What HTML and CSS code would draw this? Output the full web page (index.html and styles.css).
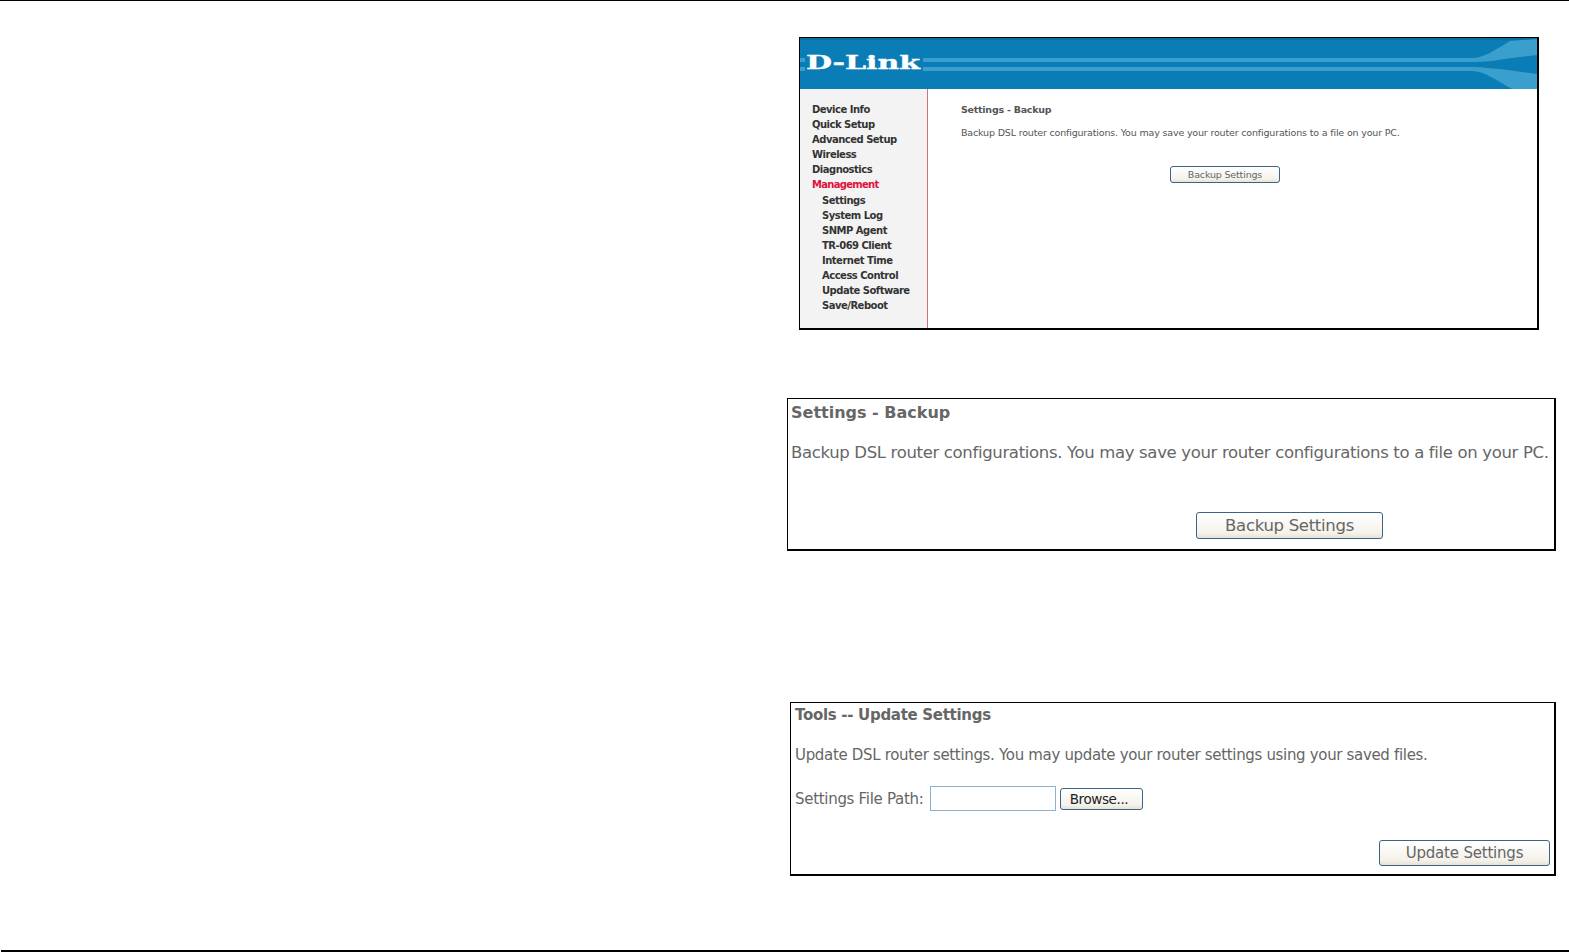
FILE: index.html
```html
<!DOCTYPE html>
<html lang="en">

<head>
    <meta charset="UTF-8" />
    <title>Settings - Backup</title>
    <link rel="stylesheet" href="styles.css">
</head>

<body>
    <div class="page">
        <div class="rule"></div>

        <div class="shot shot-router">
            <svg class="banner" width="737" height="51" viewBox="0 0 737 51">
                <rect width="737" height="51" fill="#0a7cb6" />
                <rect width="737" height="2" fill="#0b6f9f" />
                <path fill="#3b9fcd" d="M0 20H672C682 20 692 14 710 3L737 1V17L708 20.500C694 23 684 24 672 24H0Z" />
                <path fill="#3b9fcd" d="M0 29H672C684 29 696 31 708 32L737 36V51H712C696 42 684 33 672 33H0Z" />
                <rect x="5" y="14" width="118" height="22" fill="#0a7cb6" />
                <text class="logo" x="6" y="31" textLength="114" lengthAdjust="spacingAndGlyphs">D-Link</text>
            </svg>
            <div class="router-body">
                <div class="side-menu">
                    <div>Device Info</div>
                    <div>Quick Setup</div>
                    <div>Advanced Setup</div>
                    <div>Wireless</div>
                    <div>Diagnostics</div>
                    <div class="active">Management</div>
                    <div class="sub">Settings</div>
                    <div class="sub">System Log</div>
                    <div class="sub">SNMP Agent</div>
                    <div class="sub">TR-069 Client</div>
                    <div class="sub">Internet Time</div>
                    <div class="sub">Access Control</div>
                    <div class="sub">Update Software</div>
                    <div class="sub">Save/Reboot</div>
                </div>
                <div class="router-content">
                    <h3>Settings - Backup</h3>
                    <p>Backup DSL router configurations. You may save your router configurations to a file on your PC.</p>
                    <button class="btn btn-small">Backup Settings</button>
                </div>
            </div>
        </div>

        <div class="shot shot-backup">
            <h2>Settings - Backup</h2>
            <p>Backup DSL router configurations. You may save your router configurations to a file on your PC.</p>
            <button class="btn btn-backup">Backup Settings</button>
        </div>

        <div class="shot shot-update">
            <h2>Tools -- Update Settings</h2>
            <p>Update DSL router settings. You may update your router settings using your saved files.</p>
            <div class="file-row">
                <label>Settings File Path:</label>
                <input type="text" class="file-input">
                <button class="btn btn-browse">Browse...</button>
            </div>
            <button class="btn btn-update">Update Settings</button>
        </div>

        <div class="rule rule-bottom"></div>
    </div>
</body>

</html>
```

FILE: styles.css
```css
body {
    margin: 0;
    background: #fff;
    font-family: "DejaVu Sans", sans-serif;
}

.page {
    height: 952px;
    display: flex;
    flex-direction: column;
    overflow: hidden;
}

.rule {
    height: 1px;
    background: #000;
    flex-shrink: 0;
}

.rule-bottom {
    height: 2px;
    margin-top: auto;
    margin-left: 1px;
}

.shot {
    box-sizing: border-box;
    border: 1px solid #000;
    border-right-width: 2px;
    border-bottom-width: 2px;
    flex-shrink: 0;
}

.btn {
    box-sizing: border-box;
    display: block;
    padding: 0;
    font-family: "DejaVu Sans", sans-serif;
    color: #666;
    border: 1px solid #3c6488;
    border-radius: 3px;
    background: linear-gradient(#fff, #f4f2ea 80%, #e6e2d4);
    white-space: nowrap;
}

/* router page */

.shot-router {
    width: 740px;
    height: 293px;
    margin: 36px 0 0 799px;
}

.banner {
    display: block;
}

.logo {
    font-family: "DejaVu Serif", serif;
    font-weight: bold;
    font-size: 19px;
    fill: #fff;
    stroke: #fff;
    stroke-width: 0.4px;
}

.router-body {
    display: flex;
    height: 239px;
}

.side-menu {
    width: 128px;
    flex-shrink: 0;
    box-sizing: border-box;
    padding: 13px 0 0 12px;
    background: #f3f3f3;
    border-right: 1px solid #d8707c;
    font-size: 10px;
    font-weight: bold;
    line-height: 15.09px;
    letter-spacing: -0.5px;
    color: #333;
}

.side-menu .active {
    color: #e0123c;
    letter-spacing: -0.7px;
}

.side-menu .sub {
    padding-left: 10px;
}

.router-content {
    padding: 13px 0 0 33px;
    color: #555;
    font-size: 9.5px;
    line-height: 15px;
}

.router-content h3 {
    margin: 0;
    font-size: 9.5px;
    line-height: 15px;
    letter-spacing: -0.25px;
}

.router-content p {
    margin: 8px 0 0;
    letter-spacing: -0.17px;
}

.btn-small {
    width: 110px;
    height: 17px;
    margin: 26px 0 0 209px;
    font-size: 9.5px;
    letter-spacing: -0.17px;
}

/* cropped forms */

.shot-backup {
    width: 769px;
    height: 153px;
    margin: 68px 0 0 787px;
    padding: 3px 0 0 3px;
    color: #666;
}

.shot-backup h2 {
    margin: 0;
    font-size: 16px;
    line-height: 22px;
}

.shot-backup p {
    margin: 18px 0 0;
    font-size: 16.5px;
    line-height: 22px;
    letter-spacing: -0.34px;
    white-space: nowrap;
}

.btn-backup {
    width: 187px;
    height: 27px;
    margin: 48px 0 0 405px;
    font-size: 16.5px;
    letter-spacing: -0.3px;
}

.shot-update {
    width: 766px;
    height: 174px;
    margin: 151px 0 0 790px;
    padding: 1px 0 0 4px;
    color: #666;
}

.shot-update h2 {
    margin: 0;
    font-size: 15px;
    line-height: 22px;
    letter-spacing: -0.3px;
}

.shot-update p {
    margin: 18px 0 0;
    font-size: 15px;
    line-height: 22px;
    letter-spacing: -0.33px;
    white-space: nowrap;
}

.file-row {
    display: flex;
    align-items: center;
    margin-top: 20px;
    font-size: 15px;
    letter-spacing: -0.3px;
}

.file-input {
    box-sizing: border-box;
    width: 126px;
    height: 25px;
    margin-left: 7px;
    border: 1px solid #8fb2cf;
    background: #fff;
}

.btn-browse {
    width: 83px;
    height: 22px;
    margin-left: 4px;
    padding-right: 6px;
    font-size: 13.5px;
    letter-spacing: -0.4px;
    color: #222;
}

.btn-update {
    width: 171px;
    height: 26px;
    margin: 29px 0 0 584px;
    font-size: 15px;
    letter-spacing: -0.2px;
}
```
